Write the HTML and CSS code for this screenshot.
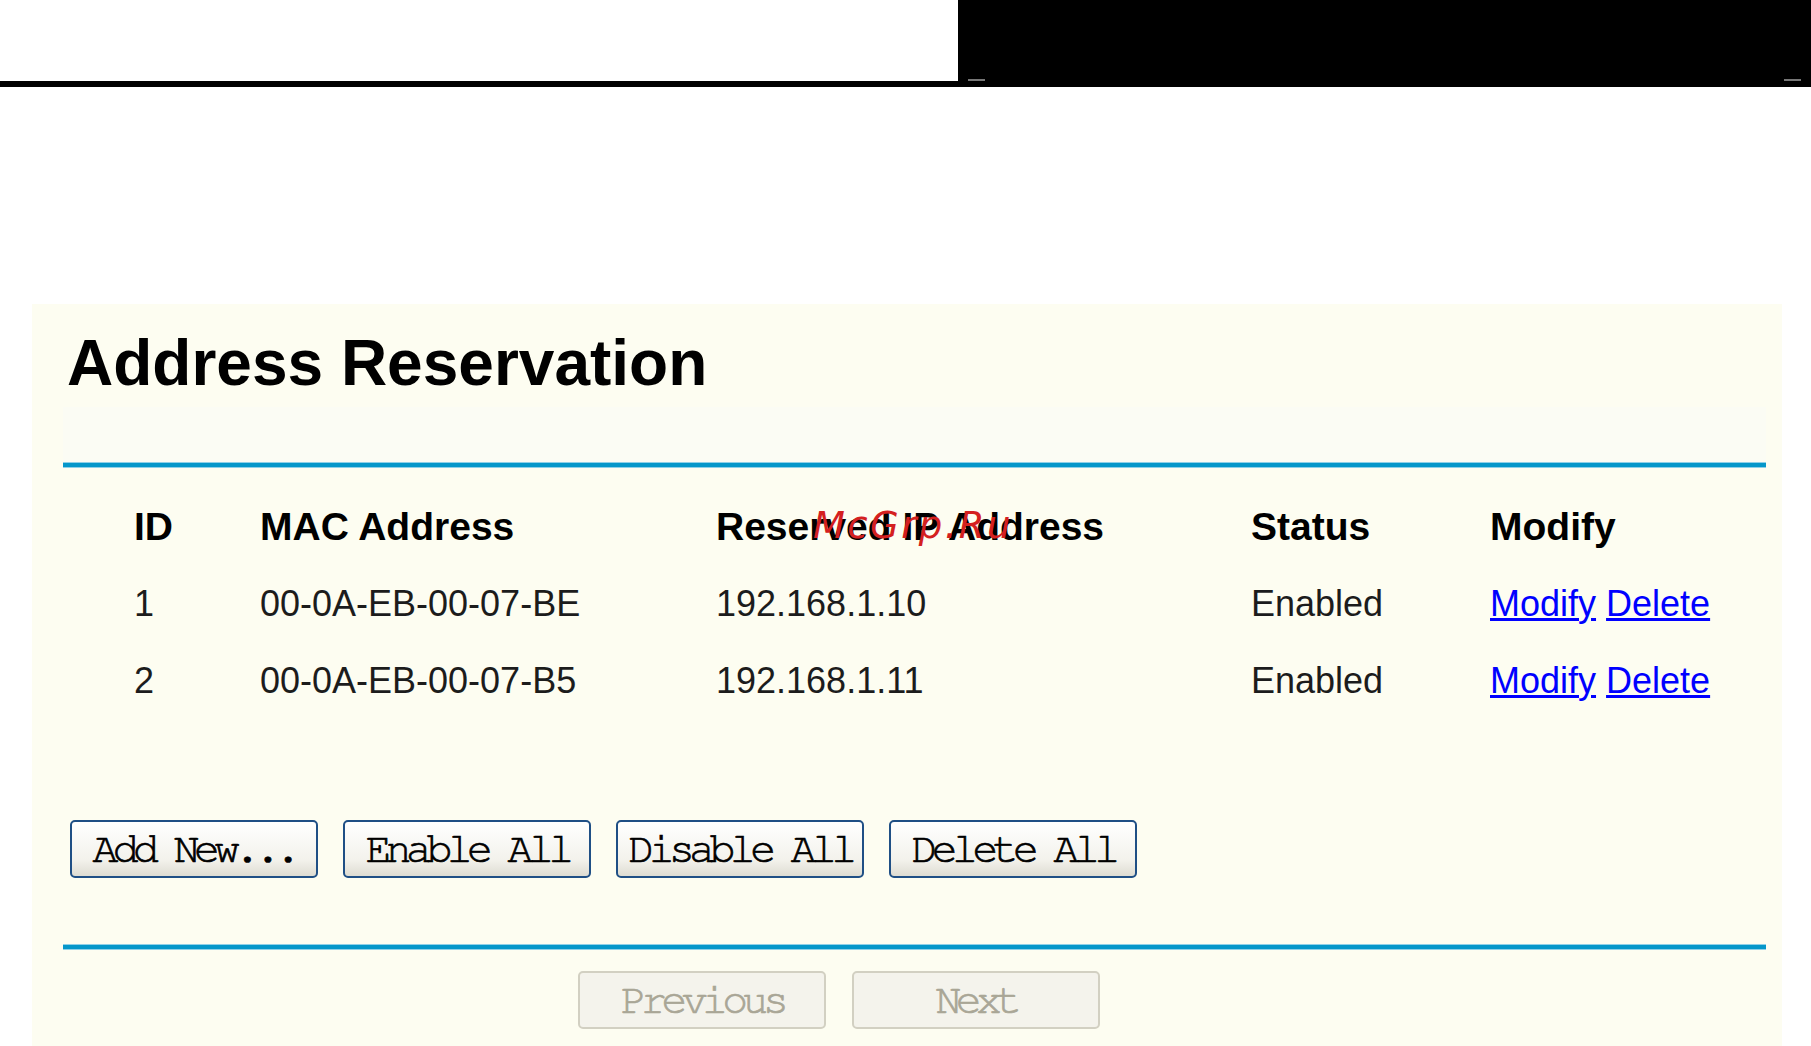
FILE: index.html
```html
<!DOCTYPE html>
<html>
<head>
    <title>Address Reservation</title>
	<link rel="stylesheet" href="styles.css">
</head>
<body>
	<div class="topbar">
		<div class="top-left"></div>
		<div class="top-right">
			<span class="mark"></span>
			<span class="mark"></span>
		</div>
	</div>

	<div class="panel">
		<h1 class="title">Address Reservation</h1>
		<div class="band"></div>
		<div class="rule"></div>

		<div class="grid">
			<div class="th">ID</div>
			<div class="th">MAC Address</div>
			<div class="th">Reserved IP Address</div>
			<div class="th">Status</div>
			<div class="th">Modify</div>

			<div class="td">1</div>
			<div class="td">00-0A-EB-00-07-BE</div>
			<div class="td">192.168.1.10</div>
			<div class="td">Enabled</div>
			<div class="td"><a href="#">Modify</a> <a href="#">Delete</a></div>

			<div class="td">2</div>
			<div class="td">00-0A-EB-00-07-B5</div>
			<div class="td">192.168.1.11</div>
			<div class="td">Enabled</div>
			<div class="td"><a href="#">Modify</a> <a href="#">Delete</a></div>
		</div>

		<div class="actions">
			<button class="btn">Add New...</button>
			<button class="btn">Enable All</button>
			<button class="btn">Disable All</button>
			<button class="btn">Delete All</button>
		</div>

		<div class="rule rule2"></div>

		<div class="pager">
			<button class="btn off" disabled>Previous</button>
			<button class="btn off" disabled>Next</button>
		</div>

		<span class="stamp">McGrp.Ru</span>
	</div>
</body>
</html>
```

FILE: styles.css
```css
body{
	margin:0;
	background:#fff;
	font-family:"Liberation Sans", Arial, sans-serif;
	overflow:hidden;
}
.topbar{
	display:flex;
	height:87px;
}
.top-left{
	flex:0 0 958px;
	height:81px;
	border-bottom:6px solid #000;
}
.top-right{
	flex:1;
	background:#000;
	display:flex;
	justify-content:space-between;
	align-items:flex-end;
	padding:0 10px 6px 10px;
}
.mark{
	width:17px;
	height:2px;
	background:#777;
}
.panel{
	position:relative;
	margin:217px 29px 0 32px;
	min-height:742px;
	background:#fdfdf1;
	padding:22px 16px 0 31px;
	box-sizing:border-box;
}
.title{
	margin:0 0 7px 4px;
	font-size:64px;
	line-height:74px;
	font-weight:bold;
	color:#000;
}
.band{
	height:55px;
	background:#fbfcf4;
}
.rule{
	height:4px;
	background:#0597ca;
	border-top:1px solid #8fd0e8;
	border-bottom:1px solid #8fd0e8;
}
.grid{
	display:grid;
	grid-template-columns:126px 456px 535px 239px auto;
	grid-auto-rows:77px;
	align-items:center;
	margin:20px 0 0 71px;
}
.th{
	font-size:39px;
	font-weight:bold;
	color:#000;
}
.td{
	font-size:36px;
	color:#1c1c1c;
}
.td a{
	color:#0000ff;
	text-decoration:underline;
}
.actions{
	display:flex;
	gap:25px;
	margin:101px 0 0 7px;
}
.btn{
	width:248px;
	height:58px;
	border:2px solid #1f4f85;
	border-radius:5px;
	background:linear-gradient(#ffffff, #f3f2ec 70%, #dedcd2);
	font-family:"FreeMono", "Nimbus Mono PS", "Nimbus Mono L", "Courier 10 Pitch", "Liberation Mono", monospace;
	font-size:43px;
	letter-spacing:-5.5px;
	-webkit-text-stroke:0.7px currentColor;
	color:#000;
	padding:0;
	text-align:center;
}
.rule2{
	margin-top:66px;
}
.pager{
	display:flex;
	gap:26px;
	margin:21px 0 0 515px;
}
.btn.off{
	border-color:#d2d0c2;
	background:#f4f3ec;
	color:#a9a696;
}
.stamp{
	position:absolute;
	left:781px;
	top:203px;
	font-family:"DejaVu Sans", sans-serif;
	font-style:italic;
	font-size:37px;
	line-height:1;
	letter-spacing:2.4px;
	color:#d42020;
}
```
